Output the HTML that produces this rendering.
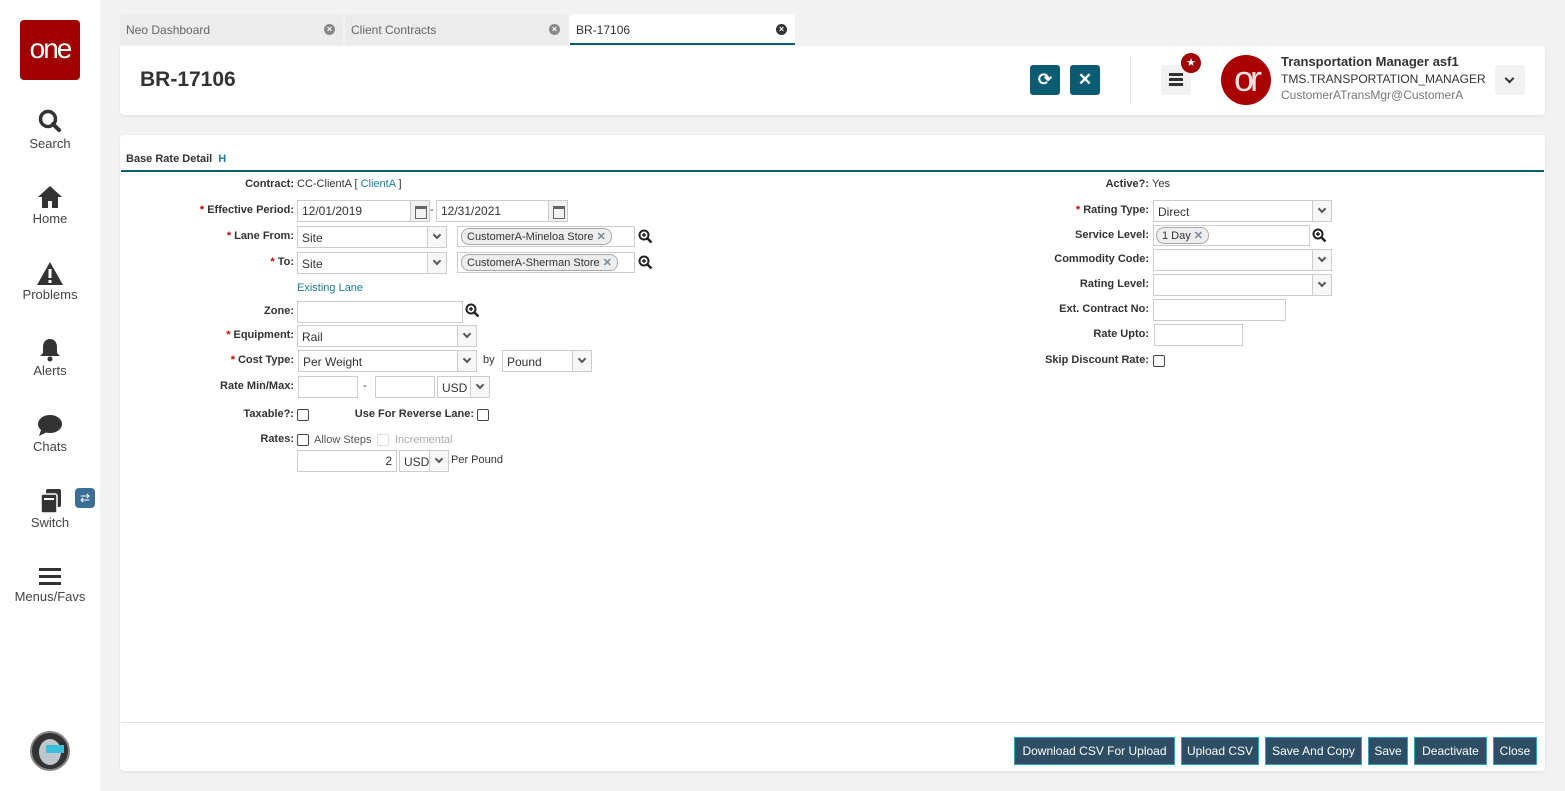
<!DOCTYPE html>
<html><head><meta charset="utf-8"><style>
*{box-sizing:border-box;margin:0;padding:0}
body{width:1565px;height:791px;background:#f2f2f2;font-family:"Liberation Sans",sans-serif;position:relative;overflow:hidden;color:#333}
.a{position:absolute}
.side{left:0;top:0;width:100px;height:791px;background:#fff}
.nav{position:absolute;left:0;width:100px;text-align:center;font-size:13px;color:#444}
.tab{position:absolute;top:14px;height:31px;background:#ececec;border-radius:4px 4px 0 0;font-size:12px;color:#666;padding:9px 6px}
.tab .x{position:absolute;right:8px;top:10px;width:11px;height:11px;border-radius:50%;background:#888;color:#fff;font-size:9px;line-height:11px;text-align:center;font-weight:bold}
.panel{background:#fff;border-radius:4px;box-shadow:0 1px 3px rgba(0,0,0,.08)}
.l{position:absolute;text-align:right;font-size:11px;font-weight:bold;color:#333;white-space:nowrap}
.l i{color:#c00;font-style:normal;margin-right:3px}
.t{position:absolute;font-size:11px;color:#333;white-space:nowrap}
.in{position:absolute;border:1px solid #ccc;background:#fff;font-size:12px;padding:3px 4px;color:#333;white-space:nowrap}
.sel{position:absolute;border:1px solid #ccc;background:#fff;font-size:12px;padding:4px 4px;color:#333;white-space:nowrap}
.sel:after{content:"";position:absolute;right:0;top:0;bottom:0;width:18px;border-left:1px solid #ccc;background:#f7f7f7}
.sel b{position:absolute;right:6px;top:5px;width:6px;height:6px;border-right:2px solid #555;border-bottom:2px solid #555;transform:rotate(45deg);z-index:2}
.cal{position:absolute;width:20px;border:1px solid #ccc;background:#f2f2f2}
.cal:before{content:"";position:absolute;left:4px;top:5px;width:10px;height:9px;border:1px solid #666;border-top:3px solid #666}
.chip{position:absolute;border:1px solid #aaa;background:#eee;border-radius:8px;font-size:11px;padding:1px 5px;color:#333;white-space:nowrap}
.chip span{color:#789;font-weight:bold;margin-left:3px}
.cb{position:absolute;width:12px;height:12px;border:1px solid #444;border-radius:2px;background:#fff}
.btn{position:absolute;top:737px;height:28px;background:#2d4e64;border:1px solid #2aa6c0;color:#fff;font-size:12px;line-height:26px;text-align:center}
.zm{position:absolute;width:15px;height:15px}
</style></head><body>
<div class="a side"></div>
<div class="a" style="left:20px;top:20px;width:60px;height:60px;background:#a00000;border-radius:4px;color:#fff;font-size:28px;text-align:center;line-height:58px;letter-spacing:-2px">one</div>
<div class="nav" style="top:108px"><svg width="26" height="26" viewBox="0 0 26 26"><circle cx="11" cy="11" r="7.5" fill="none" stroke="#333" stroke-width="3.5"/><path d="M16 16l6 6" stroke="#333" stroke-width="4" stroke-linecap="round"/></svg><div style="margin-top:-1px">Search</div></div>
<div class="nav" style="top:184px"><svg width="28" height="26" viewBox="0 0 28 26"><path d="M2 13L14 2l12 11h-4v11h-6v-7h-4v7H6V13z" fill="#333"/></svg><div style="margin-top:-2px">Home</div></div>
<div class="nav" style="top:260px"><svg width="28" height="26" viewBox="0 0 28 26"><path d="M14 2L27 25H1z" fill="#333"/><rect x="12.5" y="9" width="3" height="9" fill="#fff"/><rect x="12.5" y="20" width="3" height="3" fill="#fff"/></svg><div style="margin-top:-2px">Problems</div></div>
<div class="nav" style="top:336px"><svg width="26" height="26" viewBox="0 0 26 26"><path d="M13 3c-5 0-7 4-7 8v6l-3 3h20l-3-3v-6c0-4-2-8-7-8z" fill="#333"/><circle cx="13" cy="23" r="2.5" fill="#333"/></svg><div style="margin-top:-2px">Alerts</div></div>
<div class="nav" style="top:412px"><svg width="28" height="26" viewBox="0 0 28 26"><ellipse cx="14" cy="12" rx="12" ry="9" fill="#333"/><path d="M5 18l-2 6 8-4z" fill="#333"/></svg><div style="margin-top:-2px">Chats</div></div>
<div class="nav" style="top:488px"><svg width="28" height="26" viewBox="0 0 28 26"><rect x="10" y="1" width="15" height="18" rx="2" fill="#333"/><rect x="5" y="6" width="16" height="19" rx="2" fill="#333" stroke="#fff" stroke-width="1.5"/><rect x="8" y="10" width="10" height="2" fill="#fff"/></svg><div style="margin-top:-2px">Switch</div></div>
<div class="a" style="left:75px;top:488px;width:20px;height:20px;background:#3b6f95;border-radius:4px;color:#fff;font-size:12px;text-align:center;line-height:20px">⇄</div>
<div class="nav" style="top:566px"><svg width="24" height="22" viewBox="0 0 24 22"><rect x="1" y="2" width="22" height="3" fill="#333"/><rect x="1" y="9" width="22" height="3" fill="#333"/><rect x="1" y="16" width="22" height="3" fill="#333"/></svg><div style="margin-top:-2px">Menus/Favs</div></div>
<div class="a" style="left:30px;top:731px;width:40px;height:40px;border-radius:50%;background:#333;border:2px solid #888"><div style="position:absolute;left:7px;top:6px;width:22px;height:26px;border-radius:50%;background:#bcc6cc"></div><div style="position:absolute;left:14px;top:12px;width:18px;height:8px;background:#3ac0d8"></div></div>

<div class="tab" style="left:120px;width:223px">Neo Dashboard<div class="x">×</div></div>
<div class="tab" style="left:345px;width:223px">Client Contracts<div class="x">×</div></div>
<div class="tab" style="left:570px;width:225px;background:#fff;color:#333;border-bottom:2px solid #0b5c73">BR-17106<div class="x" style="background:#333">×</div></div>

<div class="a panel" style="left:120px;top:46px;width:1425px;height:69px;border-radius:0 4px 4px 4px"></div>
<div class="a" style="left:140px;top:68px;font-size:21px;font-weight:bold;color:#333">BR-17106</div>
<div class="a" style="left:1030px;top:65px;width:30px;height:30px;background:#0b5c73;border-radius:3px;color:#fff;text-align:center;line-height:30px;font-size:17px;font-weight:bold">⟳</div>
<div class="a" style="left:1070px;top:65px;width:30px;height:30px;background:#0b5c73;border-radius:3px;color:#fff;text-align:center;line-height:30px;font-size:17px;font-weight:bold">✕</div>
<div class="a" style="left:1130px;top:56px;width:1px;height:48px;background:#e6e6e6"></div>
<div class="a" style="left:1161px;top:65px;width:30px;height:30px;background:#f2f2f2;border-radius:3px"><div style="position:absolute;left:8px;top:8px;width:14px;height:3px;background:#333;box-shadow:0 5px 0 #333,0 10px 0 #333"></div></div>
<div class="a" style="left:1181px;top:53px;width:20px;height:20px;border-radius:50%;background:#a00000;color:#fff;font-size:11px;text-align:center;line-height:20px">★</div>
<div class="a" style="left:1221px;top:55px;width:50px;height:50px;border-radius:50%;background:#a00;color:#f5e0e0;font-size:36px;text-align:center;line-height:48px;letter-spacing:-4px;overflow:hidden">or</div>
<div class="a" style="left:1281px;top:54px;font-size:13px;font-weight:bold;color:#333">Transportation Manager asf1</div>
<div class="a" style="left:1281px;top:72px;font-size:12px;color:#333">TMS.TRANSPORTATION_MANAGER</div>
<div class="a" style="left:1281px;top:88px;font-size:12px;color:#777">CustomerATransMgr@CustomerA</div>
<div class="a" style="left:1495px;top:65px;width:30px;height:30px;background:#f2f2f2;border-radius:3px"><div style="position:absolute;left:11px;top:10px;width:7px;height:7px;border-right:2px solid #333;border-bottom:2px solid #333;transform:rotate(45deg)"></div></div>

<div class="a panel" style="left:120px;top:135px;width:1425px;height:636px"></div>
<div class="a" style="left:126px;top:153px;font-size:11px;font-weight:bold;color:#333">Base Rate Detail <span style="color:#1a7d99;margin-left:3px">H</span></div>
<div class="a" style="left:121px;top:170px;width:1423px;height:2px;background:#0b5c73"></div>
<div class="a" style="left:121px;top:722px;width:1423px;height:1px;background:#e2e2e2"></div>

<div class="l" style="left:94px;width:200px;top:178px">Contract:</div><div class="t" style="left:297px;top:178px">CC-ClientA [ <span style="color:#1a7d99">ClientA</span> ]</div>
<div class="l" style="left:94px;width:200px;top:204px"><i>*</i>Effective Period:</div>
<div class="in" style="left:297px;top:200px;width:114px;height:22px">12/01/2019</div><div class="cal" style="left:410px;top:200px;height:22px"></div>
<div class="t" style="left:430px;top:204px">-</div>
<div class="in" style="left:436px;top:200px;width:113px;height:22px">12/31/2021</div><div class="cal" style="left:548px;top:200px;height:22px"></div>
<div class="l" style="left:94px;width:200px;top:230px"><i>*</i>Lane From:</div>
<div class="sel" style="left:297px;top:226px;width:150px;height:22px">Site<b></b></div>
<div class="in" style="left:457px;top:226px;width:178px;height:21px"></div><div class="chip" style="left:461px;top:228px">CustomerA-Mineloa Store<span>✕</span></div>
<svg class="zm" style="left:638px;top:229px" viewBox="0 0 15 15"><circle cx="6" cy="6" r="4.5" fill="none" stroke="#222" stroke-width="2"/><path d="M9.5 9.5l4 4" stroke="#222" stroke-width="2.5"/><path d="M4 6h4M6 4v4" stroke="#222" stroke-width="1.5"/></svg>
<div class="l" style="left:94px;width:200px;top:256px"><i>*</i>To:</div>
<div class="sel" style="left:297px;top:252px;width:150px;height:22px">Site<b></b></div>
<div class="in" style="left:457px;top:252px;width:178px;height:21px"></div><div class="chip" style="left:461px;top:254px">CustomerA-Sherman Store<span>✕</span></div>
<svg class="zm" style="left:638px;top:255px" viewBox="0 0 15 15"><circle cx="6" cy="6" r="4.5" fill="none" stroke="#222" stroke-width="2"/><path d="M9.5 9.5l4 4" stroke="#222" stroke-width="2.5"/><path d="M4 6h4M6 4v4" stroke="#222" stroke-width="1.5"/></svg>
<div class="t" style="left:297px;top:282px;color:#1a7d99">Existing Lane</div>
<div class="l" style="left:94px;width:200px;top:305px">Zone:</div>
<div class="in" style="left:297px;top:301px;width:166px;height:22px"></div>
<svg class="zm" style="left:465px;top:303px" viewBox="0 0 15 15"><circle cx="6" cy="6" r="4.5" fill="none" stroke="#222" stroke-width="2"/><path d="M9.5 9.5l4 4" stroke="#222" stroke-width="2.5"/><path d="M4 6h4M6 4v4" stroke="#222" stroke-width="1.5"/></svg>
<div class="l" style="left:94px;width:200px;top:329px"><i>*</i>Equipment:</div>
<div class="sel" style="left:297px;top:325px;width:180px;height:22px">Rail<b></b></div>
<div class="l" style="left:94px;width:200px;top:354px"><i>*</i>Cost Type:</div>
<div class="sel" style="left:298px;top:350px;width:179px;height:22px">Per Weight<b></b></div>
<div class="t" style="left:483px;top:354px">by</div>
<div class="sel" style="left:502px;top:350px;width:90px;height:22px">Pound<b></b></div>
<div class="l" style="left:94px;width:200px;top:380px">Rate Min/Max:</div>
<div class="in" style="left:298px;top:376px;width:60px;height:22px"></div>
<div class="t" style="left:363px;top:380px">-</div>
<div class="in" style="left:375px;top:376px;width:60px;height:22px"></div>
<div class="sel" style="left:437px;top:376px;width:53px;height:22px">USD<b></b></div>
<div class="l" style="left:94px;width:200px;top:408px">Taxable?:</div><div class="cb" style="left:297px;top:409px"></div>
<div class="l" style="left:274px;width:200px;top:408px">Use For Reverse Lane:</div><div class="cb" style="left:477px;top:409px"></div>
<div class="l" style="left:94px;width:200px;top:433px">Rates:</div><div class="cb" style="left:297px;top:434px"></div>
<div class="t" style="left:314px;top:434px;color:#555">Allow Steps</div>
<div class="cb" style="left:377px;top:434px;border-color:#ddd"></div>
<div class="t" style="left:395px;top:434px;color:#aaa">Incremental</div>
<div class="in" style="left:297px;top:450px;width:100px;height:22px;text-align:right">2</div>
<div class="sel" style="left:399px;top:450px;width:50px;height:22px">USD<b></b></div>
<div class="t" style="left:451px;top:454px">Per Pound</div>

<div class="l" style="left:949px;width:200px;top:178px">Active?:</div><div class="t" style="left:1152px;top:178px">Yes</div>
<div class="l" style="left:949px;width:200px;top:204px"><i>*</i>Rating Type:</div>
<div class="sel" style="left:1153px;top:200px;width:179px;height:22px">Direct<b></b></div>
<div class="l" style="left:949px;width:200px;top:229px">Service Level:</div>
<div class="in" style="left:1153px;top:225px;width:157px;height:21px"></div><div class="chip" style="left:1156px;top:227px">1 Day<span>✕</span></div>
<svg class="zm" style="left:1312px;top:228px" viewBox="0 0 15 15"><circle cx="6" cy="6" r="4.5" fill="none" stroke="#222" stroke-width="2"/><path d="M9.5 9.5l4 4" stroke="#222" stroke-width="2.5"/><path d="M4 6h4M6 4v4" stroke="#222" stroke-width="1.5"/></svg>
<div class="l" style="left:949px;width:200px;top:253px">Commodity Code:</div>
<div class="sel" style="left:1153px;top:249px;width:179px;height:22px"><b></b></div>
<div class="l" style="left:949px;width:200px;top:278px">Rating Level:</div>
<div class="sel" style="left:1153px;top:274px;width:179px;height:22px"><b></b></div>
<div class="l" style="left:949px;width:200px;top:303px">Ext. Contract No:</div>
<div class="in" style="left:1153px;top:299px;width:133px;height:22px"></div>
<div class="l" style="left:949px;width:200px;top:328px">Rate Upto:</div>
<div class="in" style="left:1154px;top:324px;width:89px;height:22px"></div>
<div class="l" style="left:949px;width:200px;top:354px">Skip Discount Rate:</div><div class="cb" style="left:1153px;top:355px"></div>

<div class="btn" style="left:1014px;width:161px">Download CSV For Upload</div>
<div class="btn" style="left:1181px;width:78px">Upload CSV</div>
<div class="btn" style="left:1265px;width:97px">Save And Copy</div>
<div class="btn" style="left:1368px;width:40px">Save</div>
<div class="btn" style="left:1414px;width:73px">Deactivate</div>
<div class="btn" style="left:1493px;width:44px">Close</div>
</body></html>
